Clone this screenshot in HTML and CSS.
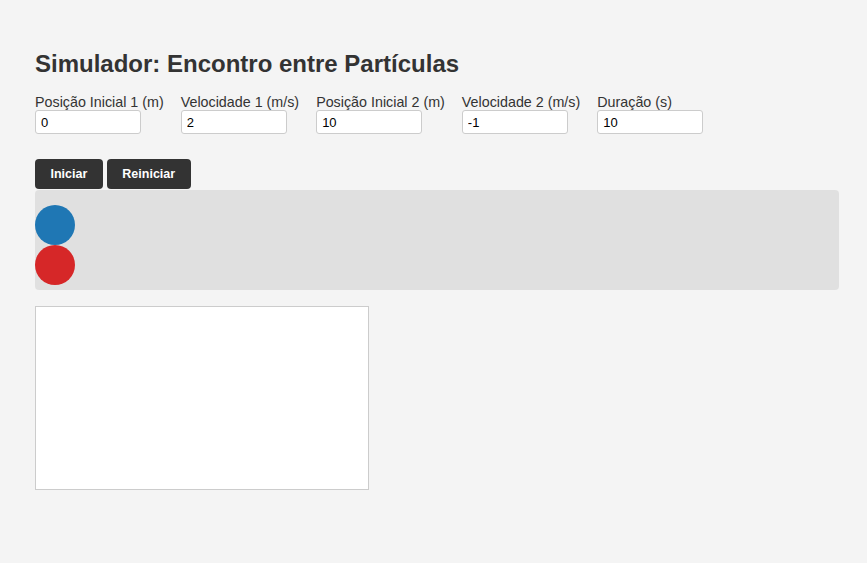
FILE: index.html
```html
<!DOCTYPE html>
<html lang="pt">
<head>
<meta charset="utf-8">
<title>Simulador: Encontro entre Partículas</title>
<link rel="stylesheet" href="styles.css">
</head>
<body>
<div class="container">
  <h1 class="title">Simulador: Encontro entre Partículas</h1>
  <div class="controls">
    <div class="field">
      <label class="field-label">Posição Inicial 1 (m)</label>
      <input class="field-input" type="text" value="0">
    </div>
    <div class="field">
      <label class="field-label">Velocidade 1 (m/s)</label>
      <input class="field-input" type="text" value="2">
    </div>
    <div class="field">
      <label class="field-label">Posição Inicial 2 (m)</label>
      <input class="field-input" type="text" value="10">
    </div>
    <div class="field">
      <label class="field-label">Velocidade 2 (m/s)</label>
      <input class="field-input" type="text" value="-1">
    </div>
    <div class="field">
      <label class="field-label">Duração (s)</label>
      <input class="field-input" type="text" value="10">
    </div>
  </div>
  <div class="buttons">
    <button class="btn">Iniciar</button>
    <button class="btn">Reiniciar</button>
  </div>
  <div class="track">
    <div class="particle particle-blue" style="margin-left: 0px"></div>
    <div class="particle particle-red" style="margin-left: 0px"></div>
  </div>
  <div class="chart"></div>
</div>
</body>
</html>
```
FILE: styles.css
```css
html, body {
  margin: 0;
  padding: 0;
  background: #f4f4f4;
  font-family: "Liberation Sans", Arial, sans-serif;
  color: #333;
}
.container {
  padding: 0 28px 0 35px;
  width: 804px;
}
.title {
  font-size: 24px;
  font-weight: bold;
  margin: 0;
  padding-top: 50px;
  line-height: 28px;
  color: #333;
}
.controls {
  display: flex;
  gap: 17px;
  margin-top: 16px;
}
.field {
  display: flex;
  flex-direction: column;
  align-items: flex-start;
}
.field-label {
  font-size: 14.3px;
  line-height: 16px;
  color: #333;
}
.field-input {
  box-sizing: border-box;
  width: 106px;
  height: 24px;
  margin: 0;
  padding: 0 5px;
  border: 1px solid #ccc;
  border-radius: 3px;
  background: #fff;
  font-family: "Liberation Sans", Arial, sans-serif;
  font-size: 13px;
  color: #000;
}
.buttons {
  display: flex;
  gap: 4px;
  margin-top: 25px;
}
.btn {
  height: 30px;
  padding: 0 15.5px;
  border: none;
  border-radius: 4px;
  background: #333;
  color: #fff;
  font-family: "Liberation Sans", Arial, sans-serif;
  font-size: 12.5px;
  font-weight: bold;
}
.track {
  box-sizing: border-box;
  height: 100px;
  margin-top: 1px;
  padding-top: 15px;
  background: #e0e0e0;
  border-radius: 4px;
}
.particle {
  width: 40px;
  height: 40px;
  border-radius: 50%;
}
.particle-blue { background: #1f77b4; }
.particle-red { background: #d62728; }
.chart {
  box-sizing: border-box;
  width: 334px;
  height: 184px;
  margin-top: 16px;
  background: #fff;
  border: 1px solid #ccc;
}
```
